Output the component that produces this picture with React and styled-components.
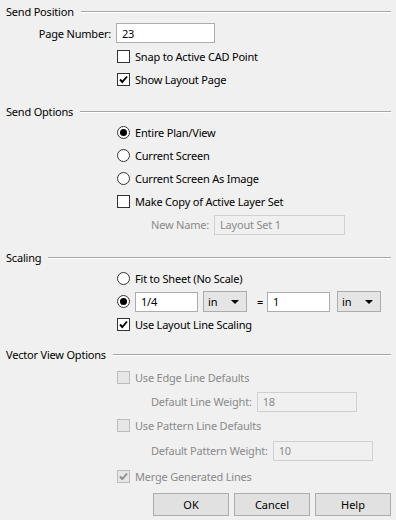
import React from "react";
import styled, { createGlobalStyle, css } from "styled-components";

const Global = createGlobalStyle`
  html, body { margin: 0; padding: 0; background: #f0f0f0; }
  body {
    font-family: "Noto Sans", "DejaVu Sans", sans-serif;
    font-size: 11px;
    letter-spacing: -0.2px;
    color: #000;
  }
`;

const Dialog = styled.div`
  width: 396px;
  height: 520px;
  box-sizing: border-box;
  padding: 1px 5px 0 6px;
  background: #f0f0f0;
  display: flex;
  flex-direction: column;
`;

const Section = styled.section`
  display: flex;
  flex-direction: column;
  margin-bottom: ${(p) => p.$after || 0}px;
`;

const Header = styled.div`
  display: flex;
  align-items: center;
  height: 20px;
  gap: 7px;
  &::after {
    content: "";
    flex: 1;
    height: 1px;
    background: #a7a7a7;
    box-shadow: 0 1px 0 #fff;
  }
`;

const Row = styled.div`
  display: flex;
  align-items: center;
  height: ${(p) => p.$h || 23}px;
  padding-left: ${(p) => p.$indent}px;
  color: ${(p) => (p.$disabled ? "#8a8a8a" : "#000")};
`;

const Label = styled.span`
  margin-right: 5px;
  white-space: nowrap;
  ${(p) =>
    p.$w &&
    css`
      width: ${p.$w}px;
      text-align: right;
    `}
`;

const Field = styled.div`
  box-sizing: border-box;
  width: ${(p) => p.$w}px;
  height: 20px;
  border: 1px solid ${(p) => (p.$disabled ? "#d0d0d0" : "#abadb3")};
  background: ${(p) => (p.$disabled ? "#f0f0f0" : "#fff")};
  color: ${(p) => (p.$disabled ? "#8a8a8a" : "#000")};
  display: flex;
  align-items: center;
  padding-left: 5px;
`;

const Select = styled.div`
  box-sizing: border-box;
  width: ${(p) => p.$w}px;
  height: 21px;
  border: 1px solid #acacac;
  background: #e5e5e5;
  display: flex;
  align-items: center;
  justify-content: space-between;
  padding: 0 7px 0 4px;
  margin-left: ${(p) => p.$ml || 0}px;
  &::after {
    content: "";
    border-left: 4px solid transparent;
    border-right: 4px solid transparent;
    border-top: 4px solid #000;
  }
`;

const Equals = styled.span`
  margin-left: 10px;
  width: 10px;
`;

const boxBase = css`
  box-sizing: border-box;
  width: 13px;
  height: 13px;
  flex: none;
  margin-right: 5px;
  display: flex;
  align-items: center;
  justify-content: center;
`;

const Box = styled.span`
  ${boxBase};
  border: 1px solid ${(p) => (p.$disabled ? "#bcbcbc" : "#333")};
  background: ${(p) => (p.$disabled ? "#e6e6e6" : "#fff")};
`;

const Radio = styled.span`
  ${boxBase};
  border-radius: 50%;
  border: 1px solid #333;
  background: #fff;
  &::after {
    content: "";
    display: ${(p) => (p.$on ? "block" : "none")};
    width: 7px;
    height: 7px;
    border-radius: 50%;
    background: #000;
  }
`;

const Check = ({ on, disabled }) => (
  <Box $disabled={disabled}>
    {on && (
      <svg width="11" height="11" viewBox="0 0 11 11">
        <path
          d="M2 5.5 L4.3 8 L9 2.5"
          fill="none"
          stroke={disabled ? "#8d8d8d" : "#000"}
          strokeWidth="1.9"
        />
      </svg>
    )}
  </Box>
);

const Buttons = styled.div`
  display: flex;
  gap: 5px;
  padding-left: 147px;
  margin-top: 4px;
`;

const Button = styled.button`
  box-sizing: border-box;
  width: 76px;
  height: 23px;
  border: 1px solid #adadad;
  background: #e1e1e1;
  font: inherit;
  color: #000;
  padding: 0;
`;

export default function App() {
  return (
    <>
      <Global />
      <Dialog>
        <Section $after={10}>
          <Header>Send Position</Header>
          <Row $indent={0} $h={24}>
            <Label $w={105}>Page Number:</Label>
            <Field $w={99}>23</Field>
          </Row>
          <Row $indent={111}>
            <Check />
            Snap to Active CAD Point
          </Row>
          <Row $indent={111}>
            <Check on />
            Show Layout Page
          </Row>
        </Section>
        <Section $after={11}>
          <Header>Send Options</Header>
          <Row $indent={111}>
            <Radio $on />
            Entire Plan/View
          </Row>
          <Row $indent={111}>
            <Radio />
            Current Screen
          </Row>
          <Row $indent={111}>
            <Radio />
            Current Screen As Image
          </Row>
          <Row $indent={111}>
            <Check />
            Make Copy of Active Layer Set
          </Row>
          <Row $indent={145} $disabled>
            <Label>New Name:</Label>
            <Field $w={131} $disabled>Layout Set 1</Field>
          </Row>
        </Section>
        <Section $after={8}>
          <Header>Scaling</Header>
          <Row $indent={111}>
            <Radio />
            Fit to Sheet (No Scale)
          </Row>
          <Row $indent={111}>
            <Radio $on />
            <Field $w={63}>1/4</Field>
            <Select $w={44} $ml={5}>in</Select>
            <Equals>=</Equals>
            <Field $w={63}>1</Field>
            <Select $w={44} $ml={7}>in</Select>
          </Row>
          <Row $indent={111}>
            <Check on />
            Use Layout Line Scaling
          </Row>
        </Section>
        <Section>
          <Header>Vector View Options</Header>
          <Row $indent={111} $h={26} $disabled>
            <Check disabled />
            Use Edge Line Defaults
          </Row>
          <Row $indent={145} $disabled>
            <Label>Default Line Weight:</Label>
            <Field $w={100} $disabled>18</Field>
          </Row>
          <Row $indent={111} $h={25} $disabled>
            <Check disabled />
            Use Pattern Line Defaults
          </Row>
          <Row $indent={145} $h={25} $disabled>
            <Label>Default Pattern Weight:</Label>
            <Field $w={100} $disabled>10</Field>
          </Row>
          <Row $indent={111} $h={26} $disabled>
            <Check on disabled />
            Merge Generated Lines
          </Row>
        </Section>
        <Buttons>
          <Button>OK</Button>
          <Button>Cancel</Button>
          <Button>Help</Button>
        </Buttons>
      </Dialog>
    </>
  );
}
